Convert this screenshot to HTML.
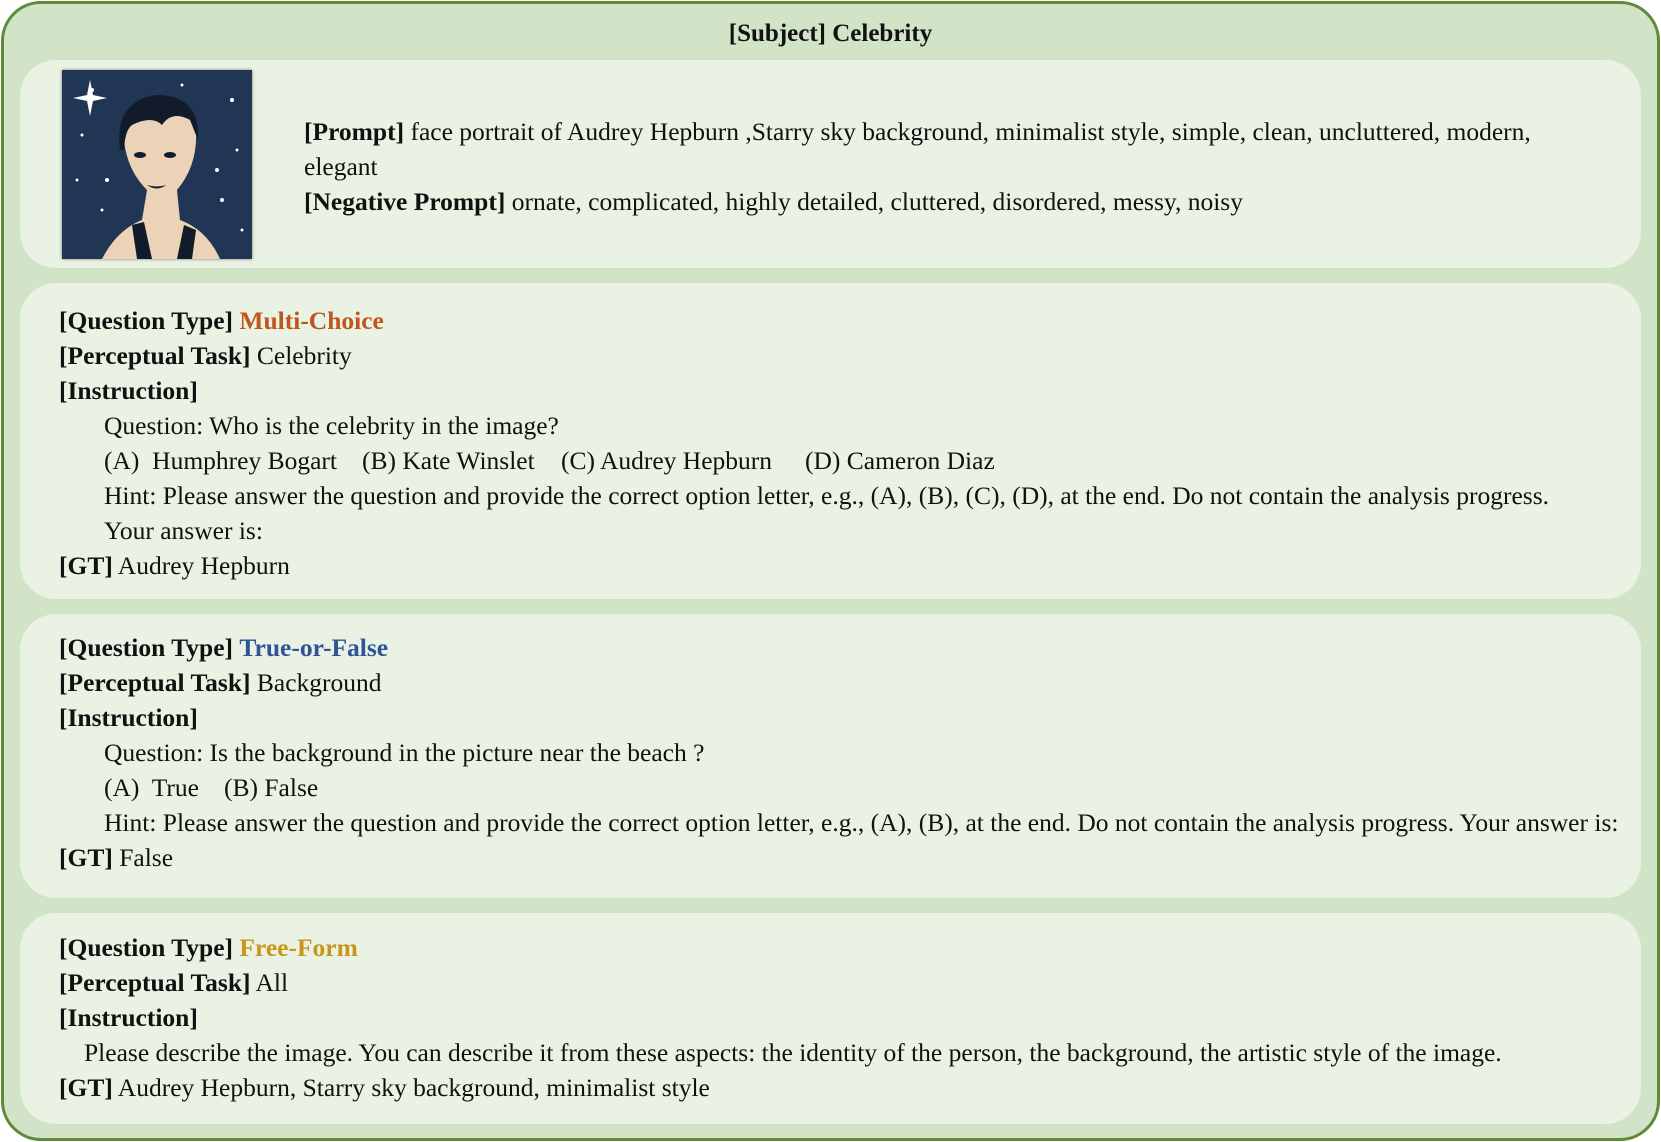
<!DOCTYPE html>
<html><head><meta charset="utf-8"><style>
*{margin:0;padding:0;box-sizing:border-box}
body{width:1661px;height:1142px;background:#fff;font-family:"Liberation Serif",serif;font-size:25.5px;color:#111;position:relative;overflow:hidden}
.outer{position:absolute;left:1px;top:1px;width:1659px;height:1140px;background:#d2e4c8;border:3px solid #5e8a3a;border-radius:40px}
.title{position:absolute;left:0;width:1661px;top:19px;text-align:center;font-weight:bold;font-size:25px;line-height:30px}
.panel{position:absolute;left:20px;width:1621px;background:#eaf2e3;border-radius:36px}
.l{position:absolute;white-space:nowrap;line-height:30px}
b{font-weight:bold}
.o{color:#c0561c;font-weight:bold}.bl{color:#2f5597;font-weight:bold}.g{color:#c8961a;font-weight:bold}
</style></head><body>
<div class="outer"></div>
<div class="title">[Subject] Celebrity</div>
<div class="panel" style="top:60px;height:208px"></div>
<div class="panel" style="top:283px;height:316px"></div>
<div class="panel" style="top:614px;height:284px"></div>
<div class="panel" style="top:913px;height:211px"></div>

<svg style="position:absolute;left:62px;top:70px;box-shadow:0 0 3px #777" width="190" height="189" viewBox="0 0 190 189">
<rect width="190" height="189" fill="#213654"/>
<g fill="#fff"><circle cx="30" cy="20" r="2"/><circle cx="170" cy="30" r="2"/><circle cx="20" cy="65" r="1.5"/><circle cx="160" cy="130" r="2"/><circle cx="40" cy="140" r="1.5"/><circle cx="175" cy="80" r="1.5"/><circle cx="15" cy="110" r="1.5"/><circle cx="120" cy="15" r="1.5"/><circle cx="180" cy="160" r="1.5"/><circle cx="45" cy="110" r="2"/><circle cx="155" cy="100" r="2"/><path d="M28 10 L31 25 L45 28 L31 31 L28 46 L25 31 L11 28 L25 25Z"/></g>
<path d="M40 189 Q55 160 80 150 L85 120 Q65 100 62 70 Q60 35 95 28 Q130 25 134 60 Q136 95 115 120 L118 150 Q145 160 158 189Z" fill="#ecd3b8"/>
<path d="M58 80 Q52 30 95 25 Q138 25 136 70 Q132 60 128 50 Q110 40 100 55 Q90 45 70 55 Q63 60 62 80Z" fill="#111b2a"/>
<path d="M75 189 L70 155 L82 152 L90 189Z M115 189 L122 155 L134 160 L130 189Z" fill="#111b2a"/>
<ellipse cx="78" cy="85" rx="6" ry="3" fill="#111b2a"/><ellipse cx="108" cy="85" rx="6" ry="3" fill="#111b2a"/>
<path d="M85 115 Q95 122 104 115 Q95 118 85 115Z" fill="#111b2a"/>
</svg>

<div class="l" style="left:304px;top:117px"><b>[Prompt]</b> face portrait of Audrey Hepburn ,Starry sky background, minimalist style, simple, clean, uncluttered, modern,</div>
<div class="l" style="left:304px;top:152px">elegant</div>
<div class="l" style="left:304px;top:187px"><b>[Negative Prompt]</b> ornate, complicated, highly detailed, cluttered, disordered, messy, noisy</div>

<div class="l" style="left:59px;top:306px"><b>[Question Type]</b> <span class="o">Multi-Choice</span></div>
<div class="l" style="left:59px;top:341px"><b>[Perceptual Task]</b> Celebrity</div>
<div class="l" style="left:59px;top:376px"><b>[Instruction]</b></div>
<div class="l" style="left:104px;top:411px">Question: Who is the celebrity in the image?</div>
<div class="l" style="left:104px;top:446px">(A)&nbsp; Humphrey Bogart</div>
<div class="l" style="left:362px;top:446px">(B) Kate Winslet</div>
<div class="l" style="left:561px;top:446px">(C) Audrey Hepburn</div>
<div class="l" style="left:805px;top:446px">(D) Cameron Diaz</div>
<div class="l" style="left:104px;top:481px">Hint: Please answer the question and provide the correct option letter, e.g., (A), (B), (C), (D), at the end. Do not contain the analysis progress.</div>
<div class="l" style="left:104px;top:516px">Your answer is:</div>
<div class="l" style="left:59px;top:551px"><b>[GT]</b> Audrey Hepburn</div>

<div class="l" style="left:59px;top:633px"><b>[Question Type]</b> <span class="bl">True-or-False</span></div>
<div class="l" style="left:59px;top:668px"><b>[Perceptual Task]</b> Background</div>
<div class="l" style="left:59px;top:703px"><b>[Instruction]</b></div>
<div class="l" style="left:104px;top:738px">Question: Is the background in the picture near the beach ?</div>
<div class="l" style="left:104px;top:773px">(A)&nbsp; True</div>
<div class="l" style="left:224px;top:773px">(B) False</div>
<div class="l" style="left:104px;top:808px">Hint: Please answer the question and provide the correct option letter, e.g., (A), (B), at the end. Do not contain the analysis progress. Your answer is:</div>
<div class="l" style="left:59px;top:843px"><b>[GT]</b> False</div>

<div class="l" style="left:59px;top:933px"><b>[Question Type]</b> <span class="g">Free-Form</span></div>
<div class="l" style="left:59px;top:968px"><b>[Perceptual Task]</b> All</div>
<div class="l" style="left:59px;top:1003px"><b>[Instruction]</b></div>
<div class="l" style="left:84px;top:1038px">Please describe the image. You can describe it from these aspects: the identity of the person, the background, the artistic style of the image.</div>
<div class="l" style="left:59px;top:1073px"><b>[GT]</b> Audrey Hepburn, Starry sky background, minimalist style</div>
</body></html>
